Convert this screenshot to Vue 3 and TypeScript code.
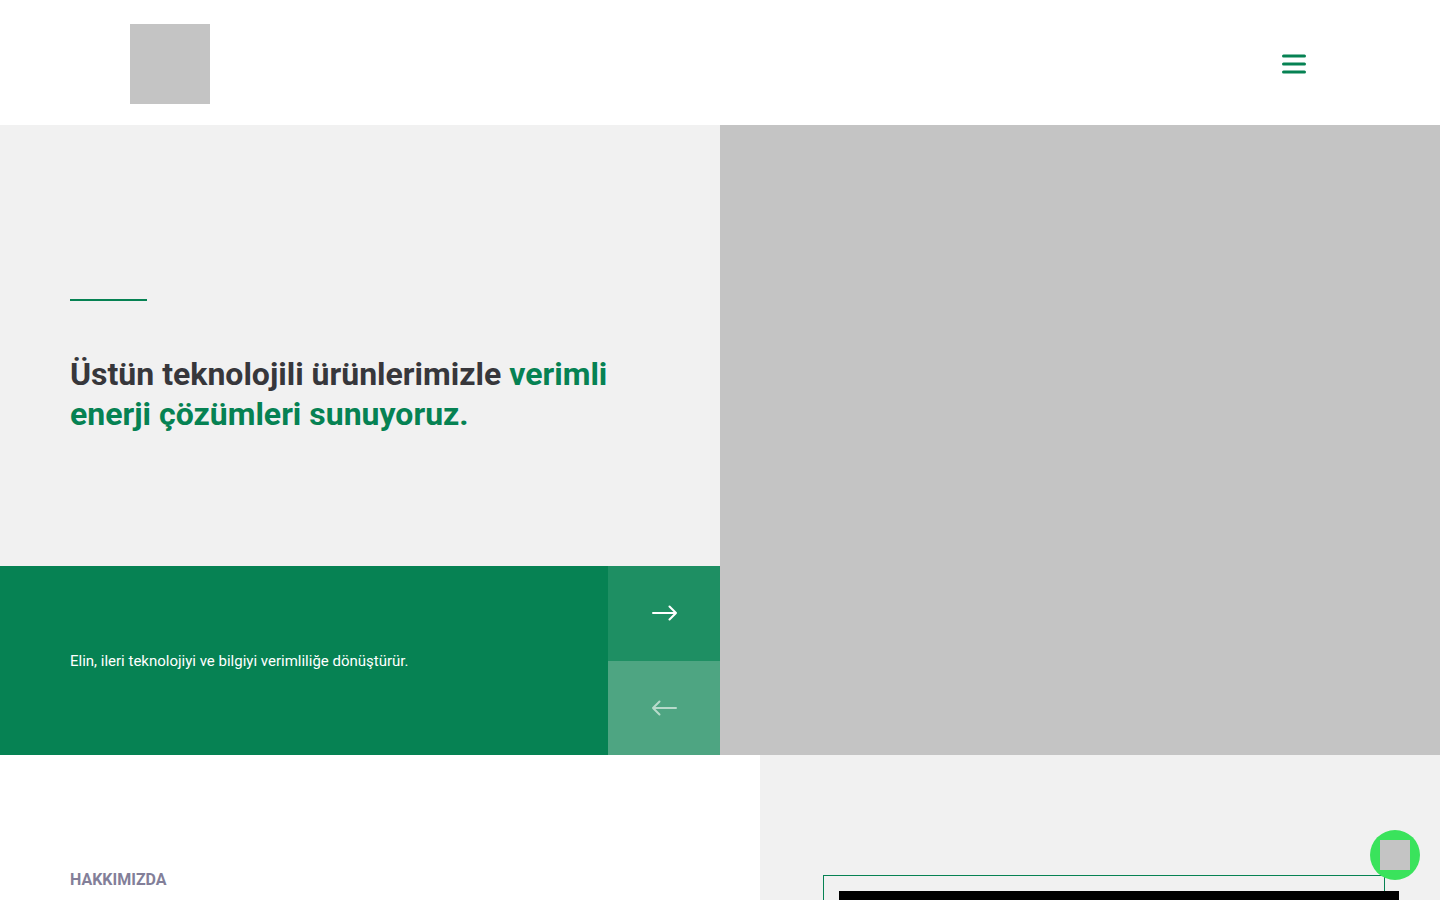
<script setup lang="ts">
import { ref } from 'vue'

interface Slide {
  lead: string
  accent: string
  tagline: string
}

const slides: Slide[] = [
  {
    lead: 'Üstün teknolojili ürünlerimizle',
    accent: 'verimli enerji çözümleri sunuyoruz.',
    tagline: 'Elin, ileri teknolojiyi ve bilgiyi verimliliğe dönüştürür.',
  },
]
const current = ref(0)

function move(step: number) {
  current.value = (current.value + step + slides.length) % slides.length
}
</script>

<template>
  <div class="page">
    <header class="header">
      <div class="header-inner">
        <a class="logo" href="#" aria-label="Elin"></a>
        <button class="menu" type="button" aria-label="Menü">
          <svg width="24" height="20" viewBox="0 0 24 20" fill="none" stroke="currentColor" stroke-width="3" stroke-linecap="round">
            <path d="M1.5 2H22.5M1.5 10H22.5M1.5 18H22.5" />
          </svg>
        </button>
      </div>
    </header>

    <main>
      <section class="hero">
        <div class="hero-text">
          <div class="intro">
            <span class="rule"></span>
            <h1>{{ slides[current].lead }} <span>{{ slides[current].accent }}</span></h1>
          </div>
          <div class="strip">
            <p>{{ slides[current].tagline }}</p>
            <div class="arrows">
              <button class="next" type="button" aria-label="Sonraki" @click="move(1)">
                <svg width="26" height="16" viewBox="0 0 26 16" fill="none" stroke="currentColor" stroke-width="2" stroke-linecap="round" stroke-linejoin="round">
                  <path d="M2 8H25M18.5 1.5L25 8L18.5 14.5" />
                </svg>
              </button>
              <button class="prev" type="button" aria-label="Önceki" @click="move(-1)">
                <svg width="26" height="16" viewBox="0 0 26 16" fill="none" stroke="currentColor" stroke-width="2" stroke-linecap="round" stroke-linejoin="round">
                  <path d="M25 8H2M8.5 1.5L2 8L8.5 14.5" />
                </svg>
              </button>
            </div>
          </div>
        </div>
        <div class="hero-image"></div>
      </section>

      <section class="about">
        <div class="about-text">
          <h2>HAKKIMIZDA</h2>
        </div>
        <div class="about-media">
          <div class="video"></div>
        </div>
      </section>
    </main>

    <a class="chat" href="#" aria-label="WhatsApp"><span></span></a>
  </div>
</template>

<style>
body {
  margin: 0;
}
</style>

<style scoped>
.page {
  font-family: Roboto, "Liberation Sans", sans-serif;
  background: #fff;
  color: #37373b;
}

.page * {
  box-sizing: border-box;
}

button {
  border: 0;
  padding: 0;
  cursor: pointer;
}

svg {
  display: block;
}

.header {
  padding: 24px 20px 21px;
}

.header-inner {
  display: flex;
  align-items: center;
  justify-content: space-between;
  max-width: 1180px;
  margin: 0 auto;
}

.logo {
  width: 80px;
  height: 80px;
  background: #c4c4c4;
}

.menu {
  padding: 4px;
  background: none;
  color: #068253;
}

.hero {
  display: grid;
  grid-template-columns: 1fr 1fr;
  min-height: 70vh;
}

.hero-text {
  display: grid;
  grid-template-rows: 7fr 3fr;
  background: #f1f1f1;
}

.intro {
  display: flex;
  flex-direction: column;
  justify-content: center;
  padding: 42px 70px 0;
}

.rule {
  width: 77px;
  height: 2px;
  margin-bottom: 53px;
  background: #068253;
}

h1 {
  margin: 0;
  font-size: 32px;
  line-height: 40px;
  font-weight: 700;
}

h1 span {
  color: #068253;
}

.strip {
  display: flex;
  background: #068253;
  color: #fff;
}

.strip p {
  flex: 1;
  align-self: center;
  margin: 0;
  padding: 0 70px;
  font-size: 15px;
  line-height: 24px;
}

.arrows {
  display: grid;
  grid-template-rows: 1fr 1fr;
  width: 112px;
}

.arrows button {
  display: flex;
  align-items: center;
  justify-content: center;
}

.next {
  background: #1e8f63;
  color: #fff;
}

.prev {
  background: #4ea582;
  color: #b8dacb;
}

.hero-image {
  background: #c4c4c4;
}

.about {
  display: grid;
  grid-template-columns: 19fr 17fr;
}

.about-text {
  padding: 113px 70px 0;
}

h2 {
  margin: 0;
  font-size: 16px;
  line-height: 24px;
  font-weight: 700;
  color: #837f99;
}

.about-media {
  padding: 136px 41px 80px 79px;
  background: #f1f1f1;
}

.video {
  position: relative;
  aspect-ratio: 16 / 9;
  background: #000;
}

.video::before {
  content: "";
  position: absolute;
  top: -16px;
  left: -16px;
  width: 100%;
  height: 100%;
  border: 1px solid #068253;
  clip-path: polygon(0 0, 100% 0, 100% 16px, 16px 16px, 16px 100%, 0 100%);
}

.chat {
  position: fixed;
  right: 20px;
  bottom: 20px;
  display: flex;
  align-items: center;
  justify-content: center;
  width: 50px;
  height: 50px;
  border-radius: 50%;
  background: #3ae35c;
}

.chat span {
  width: 30px;
  height: 30px;
  background: #c4c4c4;
}
</style>
